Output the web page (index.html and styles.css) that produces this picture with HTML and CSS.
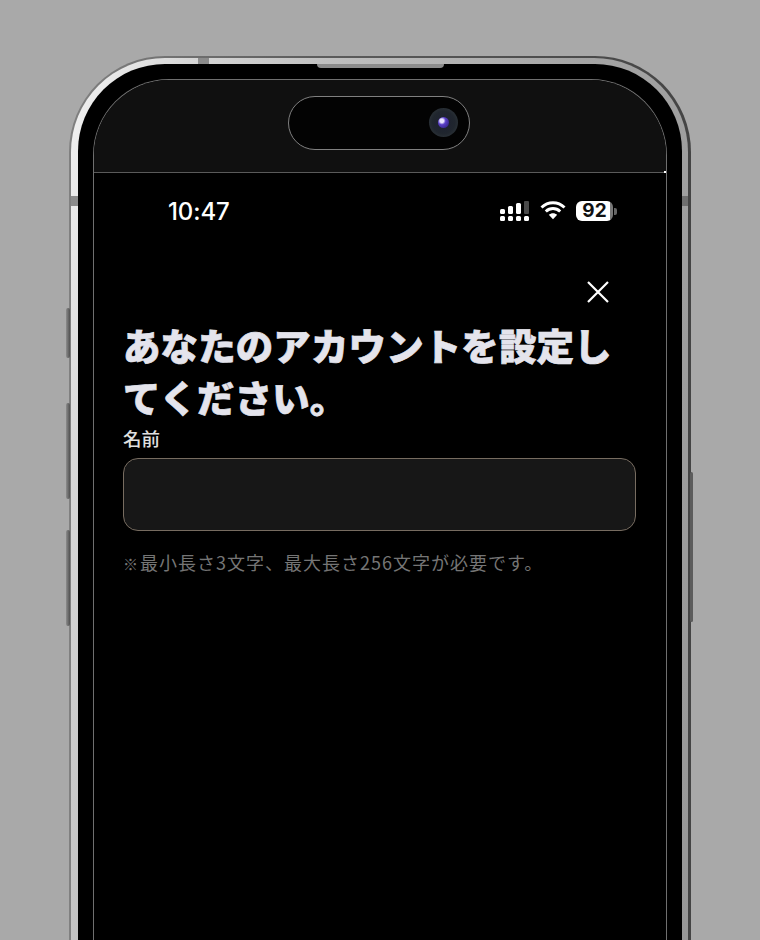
FILE: index.html
```html
<!DOCTYPE html>
<html lang="ja">
<head>
<meta charset="utf-8">
<title>アカウント設定</title>
<link rel="stylesheet" href="styles.css">
</head>
<body>
<div class="phone">
  <span class="side-btn left b1"></span>
  <span class="side-btn left b2"></span>
  <span class="side-btn left b3"></span>
  <span class="side-btn right b4"></span>
  <div class="metal">
    <span class="band band-top"></span>
    <span class="band band-left"></span>
    <span class="band band-right"></span>
    <div class="bezel">
      <span class="speaker"></span>
      <div class="screen">
        <div class="notch-panel">
          <div class="island"><span class="camera"><span class="lens"></span></span></div>
          <span class="glint"></span>
        </div>
        <div class="status">
          <span class="time">10:47</span>
          <div class="status-icons">
            <svg class="signal" width="30" height="21" viewBox="0 0 30 21">
              <g fill="#fff">
                <rect x="0" y="8" width="5" height="5" rx="1.5"/>
                <rect x="8" y="5" width="5" height="8" rx="1.5"/>
                <rect x="16" y="2" width="5" height="11" rx="1.5"/>
                <rect x="24" y="0" width="5" height="13" rx="1" fill="#4a4a4a"/>
                <rect x="0" y="15" width="5" height="5" rx="1.5"/>
                <rect x="8" y="15" width="5" height="5" rx="1.5"/>
                <rect x="16" y="15" width="5" height="5" rx="1.5"/>
                <rect x="24" y="15" width="5" height="5" rx="1.5"/>
              </g>
            </svg>
            <svg class="wifi" width="26" height="20" viewBox="0 0 26 20">
              <g fill="none" stroke="#fff" stroke-width="3">
                <path d="M1.5 7.5C8 1.2 18 1.2 24.5 7.5"/>
                <path d="M5.8 11.5C10 7.6 16 7.6 20.2 11.5"/>
              </g>
              <path d="M8.8 14.8C11.2 12.6 14.8 12.6 17.2 14.8L13 19.2Z" fill="#fff"/>
            </svg>
            <div class="battery"><span class="battery-level">92</span><span class="battery-nub"></span></div>
          </div>
        </div>
        <div class="close-row">
          <svg width="22" height="22" viewBox="0 0 22 22"><path d="M1 1L21 21M21 1L1 21" stroke="#fff" stroke-width="2.2" fill="none"/></svg>
        </div>
        <main class="content">
          <h1 class="title">あなたのアカウントを設定してください。</h1>
          <label class="label">名前</label>
          <div class="input"></div>
          <p class="note"><span class="note-mark">※</span>最小長さ3文字、最大長さ256文字が必要です。</p>
        </main>
      </div>
    </div>
  </div>
</div>
</body>
</html>
```

FILE: styles.css
```css
* { box-sizing: border-box; }
html, body { margin: 0; height: 940px; overflow: hidden; }
body {
  background: #a9a9a9;
  padding: 56px 0 0 69px;
  font-family: "Noto Sans CJK JP", "Noto Sans", sans-serif;
}
.phone {
  position: relative;
  width: 622px;
  height: 884px;
  padding: 2px 3px 0 2px;
  background: linear-gradient(90deg, #808080 0%, #5c5c5c 40%, #444 100%);
  border-radius: 96px 96px 0 0;
}
.metal {
  position: relative;
  height: 100%;
  padding: 6px 6px 0 7px;
  border-radius: 94px 94px 0 0;
  background: linear-gradient(105deg, #f4f4f4 0%, #d6d6d6 14%, #c0c0c0 30%, #a4a4a4 60%, #979797 100%);
}
.bezel {
  position: relative;
  height: 100%;
  padding: 15px 15px 0;
  background: #000;
  border-radius: 87px 87px 0 0;
}
.screen {
  height: 100%;
  background: #000;
  border: 1px solid #6f6f6f;
  border-bottom: 0;
  border-radius: 76px 76px 0 0;
  overflow: hidden;
}
.side-btn {
  position: absolute;
  width: 4px;
  background: linear-gradient(90deg, #8c8c8c, #505050);
  border-radius: 2px;
}
.side-btn.left { left: -3px; }
.side-btn.right { right: -2px; width: 3px; background: #5c5c5c; }
.b1 { top: 252px; height: 50px; }
.b2 { top: 347px; height: 96px; }
.b3 { top: 474px; height: 96px; }
.b4 { top: 416px; height: 150px; }
.band { position: absolute; background: #8b8b8b; }
.band-top { left: 127px; top: 0; width: 11px; height: 6px; }
.band-left { left: 0; top: 138px; width: 7px; height: 10px; }
.band-right { right: 0; top: 138px; width: 6px; height: 10px; background: #6e6e6e; }
.speaker {
  position: absolute;
  left: 239px;
  top: 0;
  width: 127px;
  height: 4px;
  background: #8c8c8c;
  border-radius: 0 0 4px 4px;
}
.notch-panel {
  position: relative;
  height: 93px;
  padding: 16px 0 0 194px;
  background: #101010;
  border-bottom: 1px solid #5a5a5a;
}
.glint {
  position: absolute;
  right: 0;
  bottom: -1px;
  width: 2px;
  height: 2px;
  background: #fff;
}
.island {
  display: flex;
  align-items: center;
  justify-content: flex-end;
  width: 182px;
  height: 54px;
  padding-right: 11px;
  background: #030303;
  border: 1px solid #808080;
  border-radius: 27px;
}
.camera {
  display: flex;
  align-items: center;
  justify-content: center;
  width: 29px;
  height: 29px;
  margin-top: -2px;
  border-radius: 50%;
  background: radial-gradient(circle, #1c2030 0%, #20262e 55%, #2c3338 78%, #0a0c0e 100%);
}
.lens {
  width: 11px;
  height: 11px;
  border-radius: 50%;
  background: radial-gradient(circle at 35% 35%, #e8e4ff 0 18%, #5a3fc8 38%, #241a6a 100%);
}
.status {
  display: flex;
  align-items: center;
  justify-content: space-between;
  height: 76px;
  padding: 0 49px 0 74px;
}
.time {
  font-family: Inter, sans-serif;
  font-size: 24px;
  font-weight: 500;
  letter-spacing: -0.1px;
  color: #fff;
}
.status-icons { display: flex; align-items: center; gap: 10px; }
.signal { display: block; margin-top: 1px; }
.wifi { display: block; margin-top: -2px; }
.battery { display: flex; align-items: center; gap: 1px; }
.battery-level {
  width: 37px;
  height: 20px;
  background: linear-gradient(90deg, #fff 0 92%, #777 92%);
  border-radius: 6px;
  font-family: Inter, sans-serif;
  font-size: 19px;
  font-weight: 700;
  line-height: 20px;
  text-align: center;
  color: #111;
}
.battery-nub {
  width: 3px;
  height: 7px;
  background: #666;
  border-radius: 0 2px 2px 0;
}
.close-row {
  display: flex;
  justify-content: flex-end;
  height: 70px;
  padding: 32px 57px 0 0;
}
.close-row svg { display: block; }
.content { padding: 0 30px 0 29px; }
.title {
  margin: 0;
  font-size: 37.4px;
  font-weight: 900;
  letter-spacing: 0.2px;
  line-height: 52px;
  color: #e4e4ec;
  -webkit-text-stroke: 0.7px #e4e4ec;
}
.label {
  display: block;
  margin-top: 4px;
  font-size: 18.5px;
  font-weight: 500;
  line-height: 22px;
  color: #e0e0e0;
}
.input {
  height: 73px;
  margin-top: 9px;
  background: #171717;
  border: 1px solid #776c60;
  border-radius: 15px;
}
.note {
  margin: 19px 0 0;
  font-size: 18px;
  letter-spacing: 1px;
  line-height: 24px;
  color: #757575;
}
.note-mark {
  display: inline-block;
  width: 17px;
  font-size: 15px;
  letter-spacing: 0;
  font-weight: 700;
}
```
